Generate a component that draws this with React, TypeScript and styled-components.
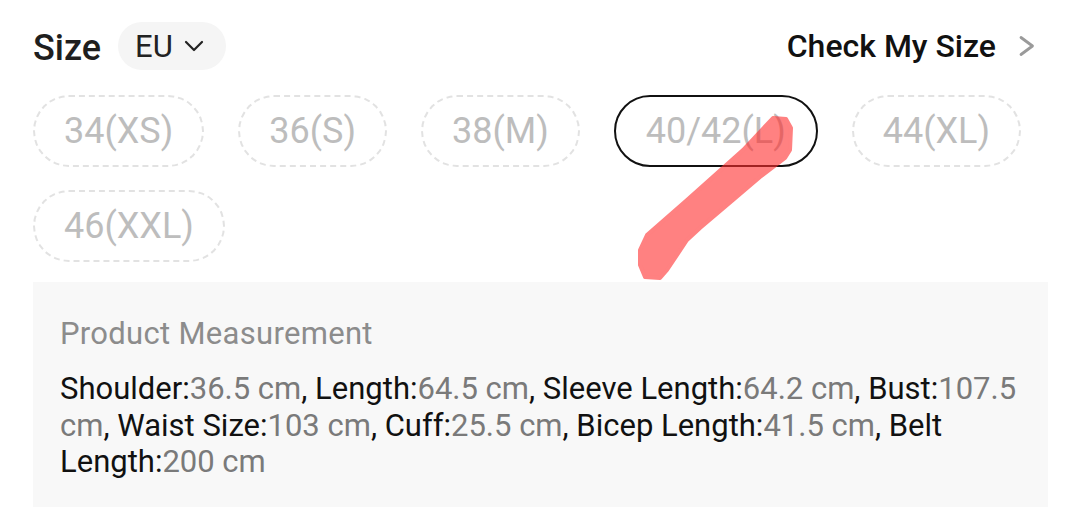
import React from "react";
import styled, { createGlobalStyle } from "styled-components";

const GlobalStyle = createGlobalStyle`
  html, body { margin: 0; padding: 0; background: #ffffff; }
  body { font-family: Roboto, "Noto Sans", "Liberation Sans", sans-serif; -webkit-font-smoothing: antialiased; }
  * { box-sizing: border-box; }
`;

const Page = styled.div`
  position: relative;
  width: 1080px;
  height: 512px;
  overflow: hidden;
  padding: 22px 32px 0 33px;
`;

const Header = styled.div`
  display: flex;
  align-items: center;
  justify-content: space-between;
  height: 48px;
`;

const HeaderLeft = styled.div`
  display: flex;
  align-items: center;
  gap: 17px;
`;

const Title = styled.span`
  font-size: 36px;
  font-weight: 500;
  color: #1f1f1f;
  line-height: 1;
  margin-top: 4px;
`;

const UnitPill = styled.div`
  display: flex;
  align-items: center;
  gap: 11px;
  height: 48px;
  padding: 0 22px 0 17px;
  border-radius: 24px;
  background: #f5f5f5;
  font-size: 31px;
  color: #222;
`;

const CheckLink = styled.div`
  display: flex;
  align-items: center;
  gap: 21px;
  padding-right: 11px;
  font-size: 32px;
  font-weight: 500;
  color: #111;
`;

const Chips = styled.div`
  display: flex;
  flex-wrap: wrap;
  column-gap: 34px;
  row-gap: 23px;
  margin-top: 25px;
`;

const Chip = styled.div<{ $selected?: boolean }>`
  display: flex;
  align-items: center;
  justify-content: center;
  height: 72px;
  padding: 0 ${(p) => (p.$selected ? "30px" : "29px")};
  border-radius: 36px;
  border: ${(p) => (p.$selected ? "2.5px solid #111" : "2px dashed #e2e2e2")};
  font-size: 36px;
  color: #bdbdbd;
  line-height: 1;
`;

const MeasureBox = styled.div`
  margin-top: 20px;
  background: #f8f8f8;
  padding: 34px 28px 26px 27px;
`;

const MeasureTitle = styled.div`
  font-size: 31px;
  line-height: 36px;
  letter-spacing: 0.3px;
  color: #8c8c8c;
`;

const MeasureText = styled.div`
  margin-top: 19px;
  font-size: 31px;
  line-height: 36.5px;
  color: #111;
`;

const Value = styled.span`
  color: #7a7a7a;
`;

const Marker = styled.svg`
  position: absolute;
  left: 0;
  top: 0;
  pointer-events: none;
`;

const sizes = ["34(XS)", "36(S)", "38(M)", "40/42(L)", "44(XL)", "46(XXL)"];
const measures: [string, string][] = [
  ["Shoulder", "36.5 cm"],
  ["Length", "64.5 cm"],
  ["Sleeve Length", "64.2 cm"],
  ["Bust", "107.5 cm"],
  ["Waist Size", "103 cm"],
  ["Cuff", "25.5 cm"],
  ["Bicep Length", "41.5 cm"],
  ["Belt Length", "200 cm"],
];

export default function App() {
  return (
    <>
      <GlobalStyle />
      <Page>
        <Header>
          <HeaderLeft>
            <Title>Size</Title>
            <UnitPill>
              EU
              <svg width="20" height="12" viewBox="0 0 20 12">
                <polyline points="2,2 10,10 18,2" fill="none" stroke="#222" strokeWidth="2.2" strokeLinecap="round" strokeLinejoin="round" />
              </svg>
            </UnitPill>
          </HeaderLeft>
          <CheckLink>
            Check My Size
            <svg width="20" height="22" viewBox="0 0 20 22">
              <polyline points="4,2.5 15.5,11 4,19.5" fill="none" stroke="#9a9a9a" strokeWidth="2.8" strokeLinecap="round" strokeLinejoin="round" />
            </svg>
          </CheckLink>
        </Header>
        <Chips>
          {sizes.map((s) => (
            <Chip key={s} $selected={s === "40/42(L)"}>
              {s}
            </Chip>
          ))}
        </Chips>
        <MeasureBox>
          <MeasureTitle>Product Measurement</MeasureTitle>
          <MeasureText>
            {measures.map(([k, v], i) => (
              <React.Fragment key={k}>
                {k}:<Value>{v}</Value>
                {i < measures.length - 1 ? ", " : ""}
              </React.Fragment>
            ))}
          </MeasureText>
        </MeasureBox>
        <Marker width="1080" height="512" viewBox="0 0 1080 512">
          <g opacity="0.6">
            <path
              d="M773 118 L786 119 L791 128 L790 150 L785 158 L760 177 L733 200 L700 228 L687 240 L667 270 L660 278 L645 277 L640 265 L640 250 L647 235 L687 200 L743 150 Z"
              fill="#ff2e2e"
              stroke="#ff2e2e"
              strokeWidth="4"
              strokeLinejoin="round"
            />
          </g>
        </Marker>
      </Page>
    </>
  );
}
